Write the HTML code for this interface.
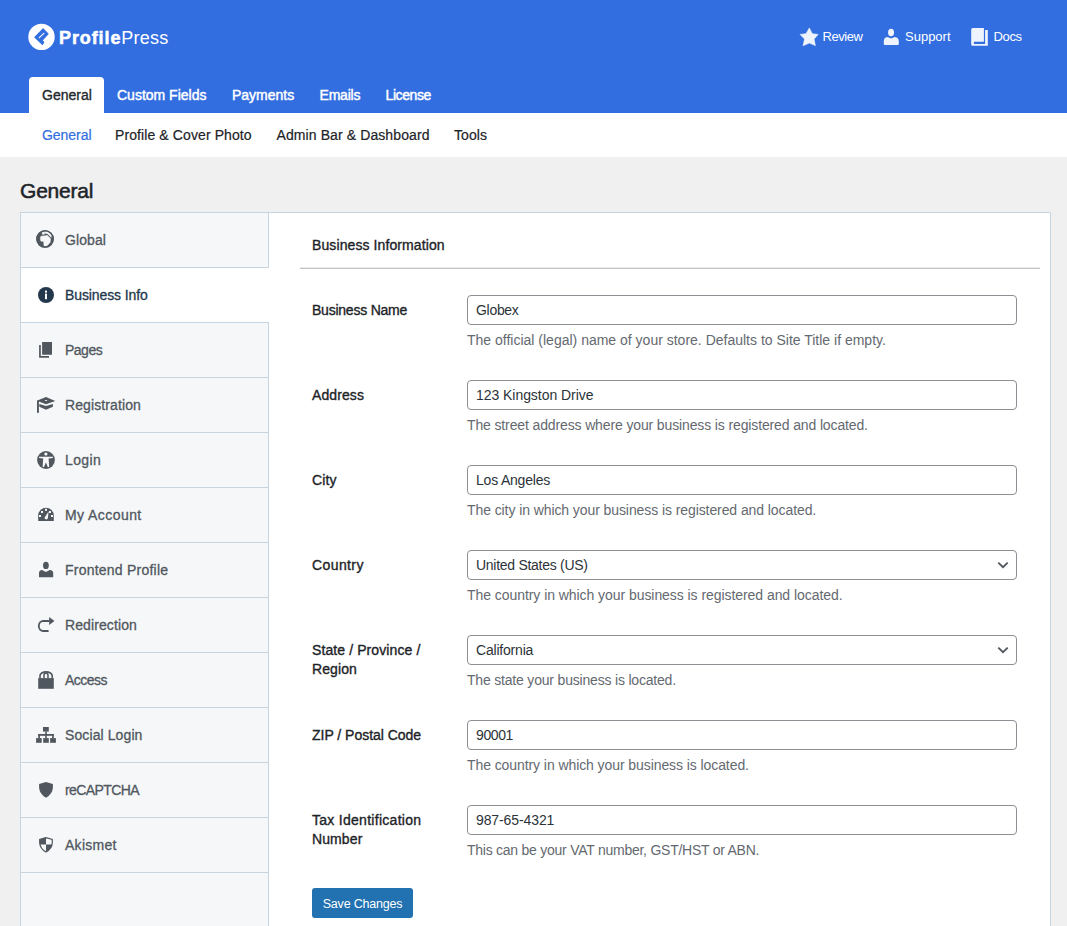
<!DOCTYPE html>
<html><head><meta charset="utf-8">
<style>
*{box-sizing:border-box;margin:0;padding:0}
html,body{width:1067px;height:926px;overflow:hidden;background:#f0f0f1;font-family:"Liberation Sans",sans-serif;color:#1d2327}
.abs{position:absolute}
.hdr{position:absolute;left:0;top:0;width:1067px;height:113px;background:#326ee0}
.brand{position:absolute;left:59px;top:27px;color:#fff;font-size:18px;line-height:22px;letter-spacing:0.6px;white-space:nowrap}
.brand b{font-weight:bold}
.tr{position:absolute;top:28px;color:#fff;font-size:13px;line-height:18px;white-space:nowrap}
.tabs a{position:absolute;top:77px;height:36px;line-height:36px;color:#fff;font-size:14px;font-weight:normal;-webkit-text-stroke:0.45px #fff;text-decoration:none;white-space:nowrap}
.tabs a.act{background:#fff;color:#23282d;font-weight:normal;font-size:14px;border-radius:4px 4px 0 0;padding:0 0 0 13px;left:29px;width:75px;line-height:36px;-webkit-text-stroke:0.35px currentColor}
.sub{position:absolute;left:0;top:113px;width:1067px;height:44px;background:#fff}
.sub a{position:absolute;top:0;line-height:44px;font-size:14px;color:#1d2327;text-decoration:none;white-space:nowrap;letter-spacing:0.1px;-webkit-text-stroke:0.2px currentColor}
.sub a.act{color:#326ee0}
h1{position:absolute;left:20px;top:177.5px;letter-spacing:-0.2px;font-size:21px;line-height:26px;font-weight:normal;color:#1d2327;-webkit-text-stroke:0.5px currentColor}
.side{position:absolute;left:20px;top:212px;width:249px;height:720px;background:#f6f7f9;border:1px solid #c6d5e0}
.it{position:absolute;left:0;width:248px;height:55px;border-bottom:1px solid #c6d5e0}
.it span{position:absolute;left:44px;top:-0.5px;line-height:55px;font-size:14px;color:#50575e;white-space:nowrap;letter-spacing:0.1px;-webkit-text-stroke:0.3px currentColor}
.it svg{position:absolute;left:11px;top:13px}
.it.act{background:#fff;z-index:3}
.it.act::after{content:"";position:absolute;right:-1px;top:0;width:1px;height:54px;background:#fff}
.it.act span{color:#23384d}
.main{position:absolute;left:268px;top:212px;width:783px;height:720px;background:#fff;border:1px solid #c6d5e0}
.h3{position:absolute;left:312px;top:237px;font-size:14px;font-weight:normal;color:#1d2327;white-space:nowrap;letter-spacing:0.1px;-webkit-text-stroke:0.35px currentColor}
.hr{position:absolute;left:300px;top:267px;width:740px;height:2px;border-top:1px solid #ebebed;background:#c3c4c7}
.lbl{position:absolute;left:312px;font-size:14px;font-weight:normal;color:#1d2327;line-height:19px;white-space:nowrap;letter-spacing:0.1px;-webkit-text-stroke:0.35px currentColor}
.inp{position:absolute;left:467px;width:550px;height:30px;border:1px solid #8c8f94;border-radius:4px;background:#fff;font-size:14px;color:#2c3338;padding-left:8px;line-height:28px;white-space:nowrap}
.desc{position:absolute;left:467px;font-size:14px;color:#646970;white-space:nowrap}
.chev{position:absolute;left:529px;top:9px}
.btn{position:absolute;left:312px;top:888px;width:101px;height:30px;background:#2271b1;border-radius:3px;color:#fff;font-size:12.5px;line-height:32px;text-align:center;white-space:nowrap;letter-spacing:-0.2px}
</style></head><body>
<div class="hdr">
  <svg class="abs" style="left:24px;top:20px" width="36" height="34" viewBox="0 0 36 34"><circle cx="17.5" cy="16.9" r="13.2" fill="#fff"/><path d="M19.1 9 L24.06 13.96 L18 20.4 L19.65 22.1 L18.37 24.43 L11.02 17.27 Z" fill="#326ee0" stroke="#326ee0" stroke-width="1.2" stroke-linejoin="round"/><path d="M15.25 17.63 L19.84 13.41" stroke="#fff" stroke-width="1.1" stroke-linecap="round"/></svg>
  <div class="brand"><b style="letter-spacing:0.9px;-webkit-text-stroke:0.5px #fff">Profile</b><span style="letter-spacing:0.2px">Press</span></div>
  <svg class="abs" style="left:796px;top:24px" width="28" height="28" viewBox="0 0 28 28"><path d="M13.3 3.9 L16.3 9.7 L22.1 10.4 L18.1 15.1 L19.35 21.6 L13.3 19 L7.1 21.8 L8.5 15.1 L4.1 10.4 L10 9.7 Z" fill="#eef3fc" stroke="#eef3fc" stroke-width="0.6" stroke-linejoin="round"/></svg>
  <div class="tr" style="left:822.5px;letter-spacing:-0.45px">Review</div>
  <svg class="abs" style="left:877px;top:24px" width="28" height="28" viewBox="0 0 28 28"><ellipse cx="14.06" cy="8.47" rx="3" ry="3.8" fill="#eef3fc"/><path d="M6.8 20 L6.8 17.5 Q6.8 13.3 10.3 13 L14.06 14.4 L17.8 13 Q21.8 13.3 21.8 17.5 L21.8 20 Q21.8 20.9 20.9 20.9 L7.7 20.9 Q6.8 20.9 6.8 20 Z" fill="#eef3fc"/></svg>
  <div class="tr" style="left:905px">Support</div>
  <svg class="abs" style="left:965px;top:24px" width="28" height="28" viewBox="0 0 28 28"><path d="M7.7 3.9 H18.9 V17.8 H8.9 V20 H20.1 V6 H22.8 V21.8 H7.7 Q6.2 21.8 6.2 20.3 V5.4 Q6.2 3.9 7.7 3.9 Z" fill="#eef3fc"/></svg>
  <div class="tr" style="left:993.5px;letter-spacing:-0.35px">Docs</div>
  <div class="tabs">
    <a class="act">General</a>
    <a style="left:117px;top:77px">Custom Fields</a>
    <a style="left:232px;top:77px">Payments</a>
    <a style="left:319.5px;top:77px;letter-spacing:-0.2px">Emails</a>
    <a style="left:385.5px;top:77px;letter-spacing:-0.4px">License</a>
  </div>
</div>
<div class="sub">
  <a class="act" style="left:42px;letter-spacing:-0.05px">General</a>
  <a style="left:115px">Profile &amp; Cover Photo</a>
  <a style="left:276.5px">Admin Bar &amp; Dashboard</a>
  <a style="left:454px">Tools</a>
</div>
<h1>General</h1>
<div class="side">
  <div class="it" style="top:0"><svg style="top:12px" width="28" height="28" viewBox="0 0 28 28"><circle cx="13.05" cy="13.94" r="8.8" fill="#50575e"/><g fill="#f6f7f9" stroke="#f6f7f9" stroke-width="0.5" stroke-linejoin="round"><path d="M8.8 11.3 L13.8 10.7 L15.1 10.3 L18.6 13.7 L18.1 17.4 L15.1 20.8 L12.1 21.5 L11.6 16.5 L8.8 16.1 L8.4 13.7 Z"/><path d="M12.7 6.2 L16.8 6.6 L19.6 10 L19.2 12.4 L15.5 8.75 L13.2 8.3 Z"/><path d="M10.1 7.2 L12.3 6.8 L12.7 9 L10.6 9.6 Z"/></g><circle cx="13.05" cy="13.94" r="8.1" fill="none" stroke="#50575e" stroke-width="1.5"/></svg><span>Global</span></div>
  <div class="it act" style="top:55px"><svg width="28" height="28" viewBox="0 0 28 28"><circle cx="14" cy="14" r="8" fill="#23384d"/><rect x="13" y="9.6" width="2" height="2" fill="#fff"/><rect x="13" y="12.6" width="2" height="5.6" fill="#fff"/></svg><span style="letter-spacing:-0.1px">Business Info</span></div>
  <div class="it" style="top:110px"><svg width="28" height="28" viewBox="0 0 28 28"><rect x="10.1" y="6" width="9.9" height="12.75" fill="#50575e"/><path d="M7.1 9 H8.8 V20 H17 V21.8 H7.1 Z" fill="#50575e"/></svg><span style="letter-spacing:-0.5px">Pages</span></div>
  <div class="it" style="top:165px"><svg width="28" height="28" viewBox="0 0 28 28"><path d="M4.8 9.7 L14 6 L23.3 10 L14 13.3 Z" fill="#50575e"/><ellipse cx="14" cy="9.5" rx="1.2" ry="0.6" fill="#f6f7f9"/><rect x="5" y="9.7" width="1.9" height="12.1" fill="#50575e"/><path d="M7.3 13 L14 15 L20.9 13 L20.9 15.7 L14 18.8 L7.3 15.7 Z" fill="#50575e"/></svg><span>Registration</span></div>
  <div class="it" style="top:220px"><svg width="28" height="28" viewBox="0 0 28 28"><circle cx="14" cy="14" r="8.9" fill="#50575e"/><circle cx="13.9" cy="8" r="1.6" fill="#f6f7f9"/><path d="M7.1 10.7 L20.9 10.7 L20.9 12.1 L16.6 12.6 L17.2 20.9 L15.8 20.9 L13.9 16.5 L12 20.9 L10.6 20.9 L11.2 12.6 L7.1 12.1 Z" fill="#f6f7f9"/></svg><span style="letter-spacing:0.4px">Login</span></div>
  <div class="it" style="top:275px"><svg width="28" height="28" viewBox="0 0 28 28"><path d="M6.2 20 L6.2 14.6 A7.8 7.8 0 0 1 21.8 14.6 L21.8 20 Z" fill="#50575e"/><g fill="#f6f7f9"><rect x="13" y="7.8" width="2" height="2"/><rect x="9" y="10" width="2" height="2"/><rect x="17" y="10" width="2" height="2"/><rect x="7" y="14" width="2" height="2"/><rect x="19" y="14" width="2" height="2"/><path d="M16.6 10.6 L15.9 17 A1.6 1.6 0 1 1 12.6 16.4 Z"/></g></svg><span style="letter-spacing:0.43px">My Account</span></div>
  <div class="it" style="top:330px"><svg width="28" height="28" viewBox="0 0 28 28"><ellipse cx="13.9" cy="9.4" rx="2.9" ry="3.6" fill="#50575e"/><path d="M7 21.2 L7 17 Q7 14.5 10 14.1 L13.9 16 L17.8 14.1 Q21.2 14.5 21.2 17 L21.2 21.2 Z" fill="#50575e"/></svg><span style="letter-spacing:0.23px">Frontend Profile</span></div>
  <div class="it" style="top:385px"><svg width="28" height="28" viewBox="0 0 28 28"><path d="M17.5 10 L11.2 10 A4.4 5 0 0 0 11.2 20 L16.6 20" stroke="#50575e" stroke-width="1.8" fill="none"/><path d="M17.1 6.05 L22.5 10 L17.1 13.9 Z" fill="#50575e"/></svg><span>Redirection</span></div>
  <div class="it" style="top:440px"><svg width="28" height="28" viewBox="0 0 28 28"><rect x="6.2" y="12.1" width="15.6" height="10.7" fill="#50575e"/><path d="M8 12.5 V9.6 A6.1 3.7 0 0 1 20.2 9.6 V12.5" stroke="#50575e" stroke-width="1.6" fill="none"/><path d="M12 12.5 V9.2 A2 2.3 0 0 1 16 9.2 V12.5" stroke="#50575e" stroke-width="1.5" fill="none"/></svg><span style="letter-spacing:-0.54px">Access</span></div>
  <div class="it" style="top:495px"><svg width="28" height="28" viewBox="0 0 28 28"><g fill="#50575e"><rect x="11" y="6" width="5.8" height="4.6"/><rect x="13.2" y="10.6" width="1.6" height="6.5"/><rect x="6.2" y="13" width="15.6" height="1.8"/><rect x="6.2" y="13" width="1.7" height="4.1"/><rect x="20.1" y="13" width="1.7" height="4.1"/><rect x="4.1" y="17.1" width="5.6" height="4.7"/><rect x="11.2" y="17.1" width="5.6" height="4.7"/><rect x="18.1" y="17.1" width="5.8" height="4.7"/></g></svg><span>Social Login</span></div>
  <div class="it" style="top:550px"><svg width="28" height="28" viewBox="0 0 28 28"><path d="M14 6 L7.1 8 L7.1 11.5 Q7.5 18 14 21.8 Q20.5 18 20.9 11.5 L20.9 8 Z" fill="#50575e"/></svg><span style="letter-spacing:-0.6px">reCAPTCHA</span></div>
  <div class="it" style="top:605px"><svg width="28" height="28" viewBox="0 0 28 28"><path d="M14 6.6 L7.7 8.4 L7.7 11.5 Q8 17.6 14 21.1 Q20 17.6 20.3 11.5 L20.3 8.4 Z" fill="#f6f7f9" stroke="#50575e" stroke-width="1.2"/><path d="M14 6.6 L7.7 8.4 L7.7 13.6 L14 13.6 Z" fill="#50575e"/><path d="M14 13.6 L20.2 13.6 Q19.5 18 14 21.1 Z" fill="#50575e"/></svg><span style="letter-spacing:0.27px">Akismet</span></div>
</div>
<div class="main"></div>
<div class="h3">Business Information</div>
<div class="hr"></div>

<div class="lbl" style="top:301px;letter-spacing:-0.23px">Business Name</div>
<div class="inp" style="top:295px;letter-spacing:-0.3px">Globex</div>
<div class="desc" style="top:332px">The official (legal) name of your store. Defaults to Site Title if empty.</div>

<div class="lbl" style="top:386px">Address</div>
<div class="inp" style="top:380px;letter-spacing:-0.05px">123 Kingston Drive</div>
<div class="desc" style="top:417px;letter-spacing:-0.13px">The street address where your business is registered and located.</div>

<div class="lbl" style="top:471px">City</div>
<div class="inp" style="top:465px;letter-spacing:-0.2px">Los Angeles</div>
<div class="desc" style="top:502px;letter-spacing:-0.085px">The city in which your business is registered and located.</div>

<div class="lbl" style="top:556px;letter-spacing:0.4px">Country</div>
<div class="inp" style="top:550px;letter-spacing:-0.28px">United States (US)<svg class="chev" width="12" height="10"><path d="M1.3 2.6 L6 7.2 L10.7 2.6" stroke="#50575e" stroke-width="1.8" fill="none"/></svg></div>
<div class="desc" style="top:587px;letter-spacing:-0.057px">The country in which your business is registered and located.</div>

<div class="lbl" style="top:641px">State / Province /<br>Region</div>
<div class="inp" style="top:635px;letter-spacing:-0.2px">California<svg class="chev" width="12" height="10"><path d="M1.3 2.6 L6 7.2 L10.7 2.6" stroke="#50575e" stroke-width="1.8" fill="none"/></svg></div>
<div class="desc" style="top:672px;letter-spacing:-0.19px">The state your business is located.</div>

<div class="lbl" style="top:726px;letter-spacing:-0.02px">ZIP / Postal Code</div>
<div class="inp" style="top:720px;letter-spacing:-0.4px">90001</div>
<div class="desc" style="top:757px;letter-spacing:-0.08px">The country in which your business is located.</div>

<div class="lbl" style="top:811px"><span style="letter-spacing:0.28px">Tax Identification</span><br>Number</div>
<div class="inp" style="top:805px;letter-spacing:-0.1px">987-65-4321</div>
<div class="desc" style="top:842px;letter-spacing:-0.25px">This can be your VAT number, GST/HST or ABN.</div>

<div class="btn">Save Changes</div>
</body></html>
